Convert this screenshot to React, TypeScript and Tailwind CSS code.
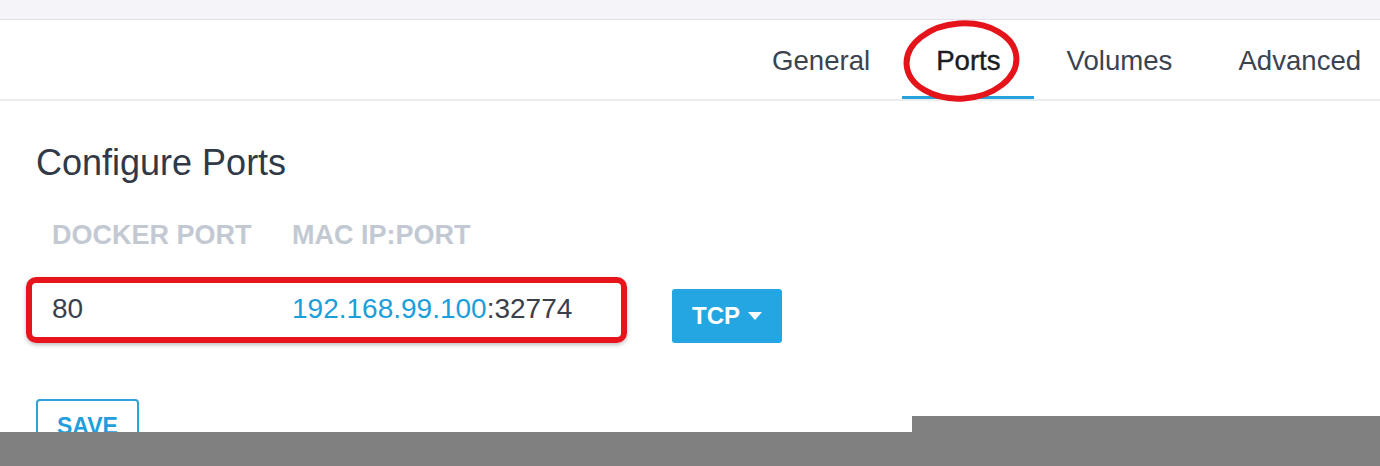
import React from "react";

const font = { fontFamily: '"Liberation Sans", Arial, sans-serif' };

export default function App() {
  const tabs = ["General", "Ports", "Volumes", "Advanced"];
  return (
    <div className="relative w-[1380px] h-[466px] overflow-hidden bg-white text-[#3a404b]" style={font}>
      <div className="h-[20px] bg-[#f4f4f9] border-b border-[#e0e0ea]" />
      <div className="relative h-[81px] border-b-2 border-[#ececec] overflow-hidden">
        <div className="flex h-full pl-[739px]">
          {tabs.map((t) => (
            <div
              key={t}
              className={
                "relative flex items-center pt-[3px] px-[33px] text-[27.6px] whitespace-nowrap " +
                (t === "Ports" ? "text-[#1a1d22] [-webkit-text-stroke:0.4px_#1a1d22]" : "text-[#3c4350]")
              }
            >
              {t}
              {t === "Ports" && (
                <div className="absolute left-[-1px] right-0 bottom-[-2px] h-[5px] bg-[#24a3dc]" />
              )}
            </div>
          ))}
        </div>
      </div>
      <svg className="absolute left-[900px] top-[19px]" width="124" height="86" viewBox="0 0 124 86">
        <ellipse cx="61.5" cy="42" rx="55" ry="37.5" fill="none" stroke="#e5141b" strokeWidth="6" transform="rotate(-4 61.5 42)" />
      </svg>

      <div className="pl-[36px] pt-[42px]">
        <h1 className="text-[36px] leading-[40px] text-[#313846]">Configure Ports</h1>
        <div className="flex mt-[37px] pl-[16px] text-[27px] font-bold text-[#c3c9d3] leading-[30px]">
          <div className="w-[240px]">DOCKER PORT</div>
          <div>MAC IP:PORT</div>
        </div>
        <div className="flex items-center mt-[27px] ml-[-10px]">
          <div className="flex items-center w-[601px] h-[66px] border-[6px] border-[#e8141b] rounded-[10px] shadow-[0_2px_4px_rgba(0,0,0,0.25)] pl-[20px] text-[28px] text-[#3a404b]">
            <div className="w-[240px] pb-[2px]">80</div>
            <div className="pb-[2px]">
              <span className="text-[#1b9fdb]">192.168.99.100</span>:32774
            </div>
          </div>
          <div className="ml-[45px] mt-[11px] flex items-center gap-[8px] h-[54px] w-[110px] justify-center rounded-[3px] bg-[#23a6e1] text-white font-bold text-[24px]">
            TCP
            <svg width="14" height="8" viewBox="0 0 14 8"><path d="M0 0 L14 0 L7 8 Z" fill="white" /></svg>
          </div>
        </div>
        <div className="mt-[56px] w-[103px] h-[60px] border-2 border-[#2aa4dc] rounded-[4px] flex justify-center pt-[11px] text-[23px] leading-[28px] font-bold text-[#1ea0dc]">
          SAVE
        </div>
      </div>

      <div className="absolute left-[912px] top-[416px] right-0 bottom-0 bg-[#808080]" />
      <div className="absolute left-0 top-[432px] right-0 bottom-0 bg-[#808080]" />
    </div>
  );
}
